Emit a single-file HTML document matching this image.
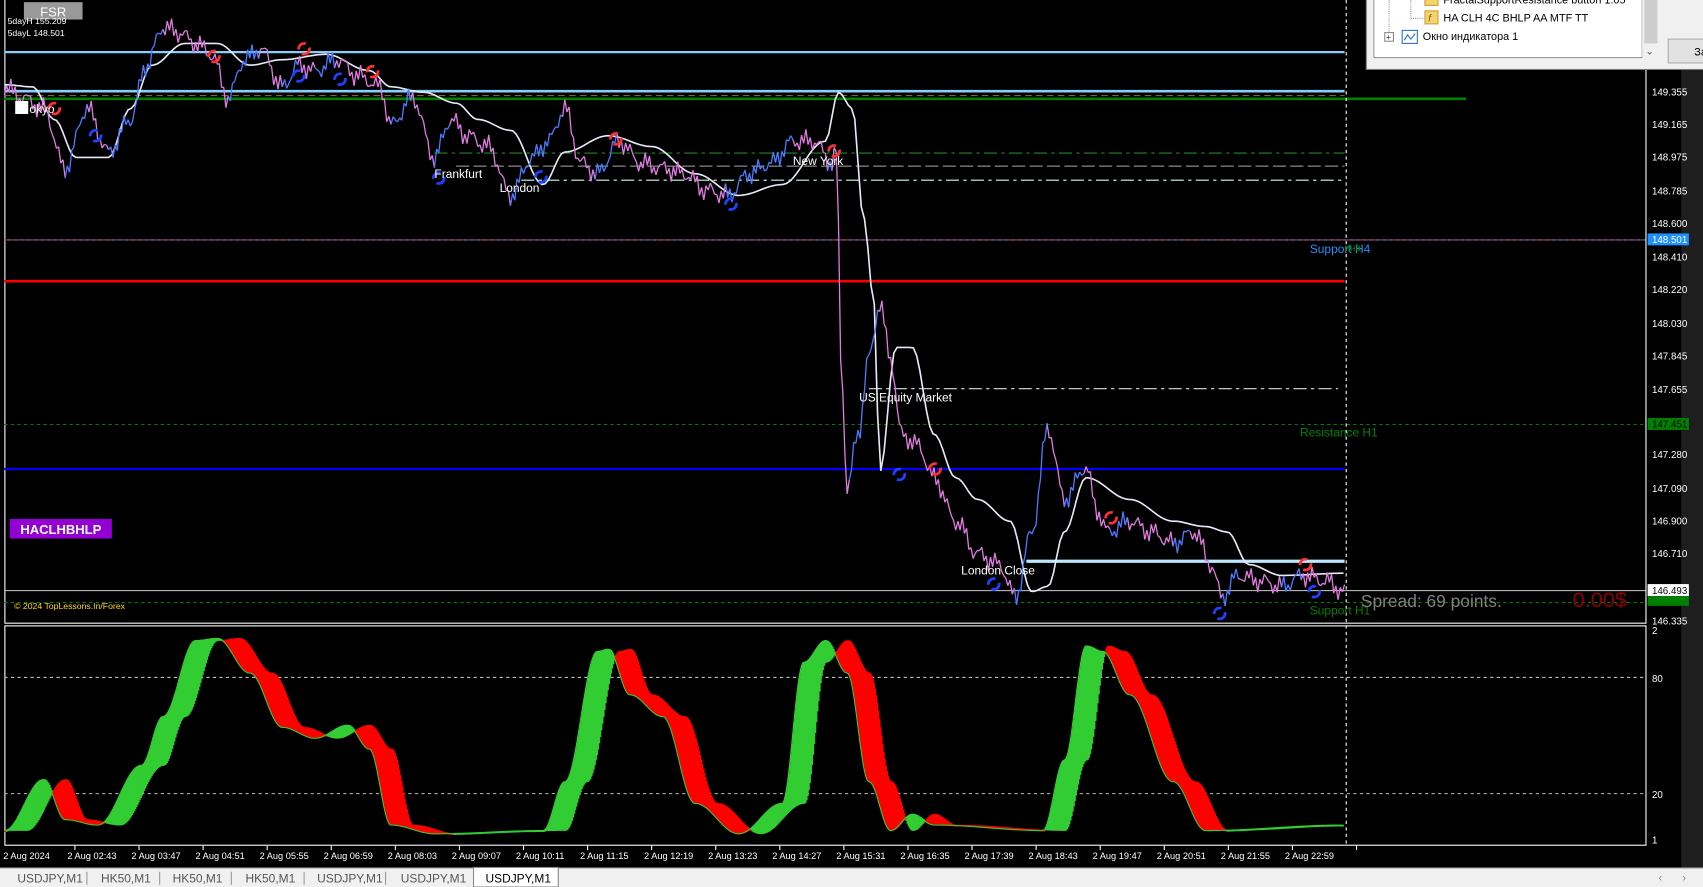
<!DOCTYPE html>
<html><head><meta charset="utf-8"><style>
html,body{margin:0;padding:0;background:#000;overflow:hidden}
svg{display:block}
text{font-family:"Liberation Sans",sans-serif}
</style></head><body>
<svg id="s" width="1703" height="887" viewBox="0 0 1568 817" preserveAspectRatio="none" xmlns="http://www.w3.org/2000/svg">
<rect width="1568" height="817" fill="#000"/>
<rect x="1548" y="0" width="20" height="800" fill="#1e1e1e"/>
<rect x="4.5" y="-1" width="1511" height="575" fill="none" stroke="#fff" stroke-width="1"/>
<rect x="4.5" y="576.5" width="1511" height="202" fill="none" stroke="#fff" stroke-width="1"/>
<line x1="4" y1="48" x2="1238" y2="48" stroke="#87cefa" stroke-width="2"/>
<line x1="4" y1="84" x2="1238" y2="84" stroke="#87cefa" stroke-width="2.5"/>
<line x1="4" y1="91" x2="1350" y2="91" stroke="#008000" stroke-width="2.5"/>
<line x1="4" y1="88" x2="1238" y2="88" stroke="#a0522d" stroke-dasharray="6,4" stroke-width="1"/>
<line x1="400" y1="141" x2="1238" y2="141" stroke="#1e8c1e" stroke-dasharray="12,4,3,4"/>
<line x1="420" y1="153" x2="1238" y2="153" stroke="#aaa" stroke-dasharray="12,4"/>
<line x1="480" y1="166" x2="1235" y2="166" stroke="#cfe" stroke-dasharray="12,4,3,4"/>
<line x1="4" y1="221" x2="1515" y2="221" stroke="#ff2020" stroke-dasharray="3,3"/>
<line x1="4" y1="221" x2="1515" y2="221" stroke="#3399ff" stroke-dasharray="3,3" stroke-dashoffset="3"/>
<line x1="4" y1="259" x2="1238" y2="259" stroke="#ff0000" stroke-width="2.5"/>
<line x1="800" y1="358" x2="1232" y2="358" stroke="#ddd" stroke-dasharray="12,4,3,4"/>
<line x1="4" y1="391" x2="1515" y2="391" stroke="#008000" stroke-dasharray="3,3"/>
<line x1="4" y1="432" x2="1238" y2="432" stroke="#0000ff" stroke-width="2"/>
<line x1="945" y1="517" x2="1238" y2="517" stroke="#bde6ff" stroke-width="3"/>
<line x1="4" y1="544" x2="1515" y2="544" stroke="#ccc" stroke-width="1"/>
<line x1="4" y1="555" x2="1515" y2="555" stroke="#008000" stroke-dasharray="3,3"/>
<line x1="1239.5" y1="0" x2="1239.5" y2="780" stroke="#fff" stroke-dasharray="3,3"/>
<line x1="4" y1="624" x2="1515" y2="624" stroke="#bbb" stroke-dasharray="3,3"/>
<line x1="4" y1="731" x2="1515" y2="731" stroke="#bbb" stroke-dasharray="3,3"/>
<path id="oscG" fill="#32cd32" stroke="#32cd32" stroke-width="0.6"/>
<path id="oscR" fill="#ff0000" stroke="#ff0000" stroke-width="0.6"/>
<polyline id="oscL" fill="none" stroke="#32cd32" stroke-width="1"/>
<polyline id="ma" fill="none" stroke="#e8e8f8" stroke-width="1.5"/>
<path id="pPink" fill="none" stroke="#e07be0" stroke-width="1.2"/>
<path id="pBlue" fill="none" stroke="#4b7bff" stroke-width="1.2"/>
<g id="marks"></g>
<rect x="22" y="2" width="54" height="16" fill="#999"/>
<text x="49" y="15" fill="#fff" font-size="12" text-anchor="middle">FSR</text>
<text x="7" y="22" fill="#fff" font-size="8">5dayH 155.209</text>
<text x="7" y="33" fill="#fff" font-size="8">5dayL 148.501</text>
<rect x="14" y="93" width="12" height="12" fill="#fff"/>
<text x="27" y="104" fill="#fff" font-size="11">okyo</text>
<text x="400" y="164" fill="#fff" font-size="11">Frankfurt</text>
<text x="460" y="177" fill="#fff" font-size="11">London</text>
<text x="730" y="152" fill="#fff" font-size="11">New York</text>
<text x="791" y="370" fill="#fff" font-size="11">US Equity Market</text>
<text x="885" y="529" fill="#fff" font-size="11">London Close</text>
<text x="1206" y="233" fill="#1e90ff" font-size="11">Support H4</text>
<text x="1238" y="231" fill="#008000" font-size="9">ина</text>
<text x="1197" y="402" fill="#008000" font-size="11">Resistance H1</text>
<text x="1206" y="566" fill="#008000" font-size="11">Support H1</text>
<text x="1253" y="559" fill="#808080" font-size="16">Spread: 69 points.</text>
<text x="1448" y="559" fill="#8b0000" font-size="20">0.00$</text>
<rect x="9" y="478" width="94" height="18" fill="#9400d3"/>
<text x="56" y="492" fill="#fff" font-size="12" font-weight="bold" text-anchor="middle">HACLHBHLP</text>
<text x="13" y="561" fill="#ffd700" font-size="8">© 2024 TopLessons.In/Forex</text>
<g fill="#fff" font-size="9">
<text x="1521" y="88">149.355</text><text x="1521" y="118">149.165</text><text x="1521" y="148">148.975</text>
<text x="1521" y="179">148.785</text><text x="1521" y="209">148.600</text><text x="1521" y="240">148.410</text>
<text x="1521" y="270">148.220</text><text x="1521" y="301">148.030</text><text x="1521" y="331">147.845</text>
<text x="1521" y="362">147.655</text><text x="1521" y="422">147.280</text><text x="1521" y="453">147.090</text>
<text x="1521" y="483">146.900</text><text x="1521" y="513">146.710</text><text x="1521" y="575">146.335</text>
<text x="1521" y="584">2</text><text x="1521" y="628">80</text><text x="1521" y="735">20</text><text x="1521" y="777">1</text>
</g>
<rect x="1517" y="215" width="38" height="11" fill="#1e90ff"/><text x="1521" y="224" fill="#fff" font-size="9">148.501</text>
<rect x="1517" y="385" width="38" height="11" fill="#008000"/><text x="1521" y="394" fill="#000" font-size="9">147.451</text>
<rect x="1517" y="538" width="38" height="11" fill="#fff"/><text x="1521" y="547" fill="#000" font-size="9">146.493</text>
<rect x="1517" y="549" width="38" height="9" fill="#008000"/>
<g fill="#fff" font-size="8.5" id="times"></g>
<rect x="0" y="799" width="1568" height="18" fill="#f0f0f0"/>
<line x1="0" y1="799.5" x2="1568" y2="799.5" stroke="#999"/>
<g font-size="11" fill="#555">
<text x="16" y="813">USDJPY,M1</text><text x="93" y="813">HK50,M1</text><text x="159" y="813">HK50,M1</text>
<text x="226" y="813">HK50,M1</text><text x="292" y="813">USDJPY,M1</text><text x="369" y="813">USDJPY,M1</text>
</g>
<g stroke="#999"><line x1="80" y1="803" x2="80" y2="815"/><line x1="147" y1="803" x2="147" y2="815"/><line x1="213" y1="803" x2="213" y2="815"/><line x1="280" y1="803" x2="280" y2="815"/><line x1="355" y1="803" x2="355" y2="815"/></g>
<rect x="436" y="799" width="78" height="18" fill="#fff" stroke="#888"/>
<text x="447" y="813" font-size="11" fill="#000">USDJPY,M1</text>
<text x="1527" y="812" font-size="10" fill="#888">‹</text><text x="1549" y="812" font-size="10" fill="#888">›</text>
<rect x="1258" y="-1" width="320" height="65" fill="#f0f0f0" stroke="#777"/>
<rect x="1265" y="-1" width="247" height="54" fill="#fff" stroke="#999"/>
<rect x="1512" y="0" width="16" height="53" fill="#f0f0f0"/>
<rect x="1514" y="0" width="12" height="40" fill="#cdcdcd"/>
<text x="1515" y="50" font-size="9" fill="#555">⌄</text>
<rect x="1536" y="36" width="40" height="22" fill="#e1e1e1" stroke="#adadad"/>
<text x="1560" y="51" font-size="10" fill="#000">За</text>
<line x1="1279" y1="0" x2="1279" y2="34" stroke="#999" stroke-dasharray="1,1"/>
<line x1="1299" y1="0" x2="1299" y2="17" stroke="#999" stroke-dasharray="1,1"/>
<line x1="1299" y1="17" x2="1311" y2="17" stroke="#999" stroke-dasharray="1,1"/>
<rect x="1312" y="10" width="12" height="12" fill="#f3d36e" stroke="#c9a030"/>
<rect x="1312" y="-7" width="12" height="12" fill="#f3d36e" stroke="#c9a030"/>
<text x="1315" y="20" font-size="9" fill="#8a5a00" font-style="italic">f</text>
<text x="1329" y="3" font-size="10" fill="#000">FractalSupportResistance button 1.05</text>
<text x="1329" y="20" font-size="10" fill="#000">HA CLH 4C BHLP AA MTF TT</text>
<rect x="1275" y="30" width="8" height="8" fill="#fff" stroke="#888"/>
<text x="1276" y="37" font-size="8" fill="#333">+</text>
<rect x="1291" y="28" width="14" height="12" fill="#fff" stroke="#2a6fd6"/>
<path d="M1293 37 L1296 32 L1299 36 L1303 31" stroke="#2a6fd6" fill="none"/>
<text x="1310" y="37" font-size="10" fill="#000">Окно индикатора 1</text>
</svg>
<script>
(function(){
var NS="http://www.w3.org/2000/svg";
function $(i){return document.getElementById(i);}
var sv=$('s');
function el(t,a,p){var e=document.createElementNS(NS,t);for(var k in a)e.setAttribute(k,a[k]);(p||sv).appendChild(e);return e;}
function interp(pts,x){if(x<=pts[0][0])return pts[0][1];for(var i=1;i<pts.length;i++){if(x<=pts[i][0]){var a=pts[i-1],b=pts[i];var t=(x-a[0])/(b[0]-a[0]);t=(1-Math.cos(t*Math.PI))/2;return a[1]+(b[1]-a[1])*t;}}return pts[pts.length-1][1];}
var P=[[4,80],[20,90],[40,100],[60,155],[80,100],[100,140],[120,110],[135,60],[150,25],[165,30],[180,40],[195,50],[210,90],[225,55],[240,45],[260,80],[275,60],[290,65],[310,55],[330,70],[350,80],[360,115],[380,90],[400,145],[415,110],[430,125],[450,135],[470,180],[490,145],[505,130],[520,100],[535,150],[550,160],[570,130],[590,150],[610,155],[630,160],[650,175],[670,180],[690,160],[710,150],[730,130],[750,130],[765,150],[770,140],[775,350],[780,450],[790,400],[800,330],[810,280],[820,330],[830,400],[845,410],[860,440],[880,480],[900,510],[920,520],[935,550],[950,490],[965,395],[980,460],[1000,430],[1010,470],[1020,490],[1040,480],[1060,490],[1080,500],[1100,490],[1115,520],[1125,550],[1140,530],[1160,535],[1180,540],[1200,530],[1220,535],[1238,545]];
var pk="",bl="",prev=null,x,y;
for(x=4;x<=1238;x+=2){y=interp(P,x)+Math.sin(x*1.7)*6+Math.sin(x*0.43)*5;if(prev){var up=interp(P,x+4)<interp(P,x-4)-1;var seg="M"+prev[0]+" "+prev[1].toFixed(1)+"L"+x+" "+y.toFixed(1);if(up)bl+=seg;else pk+=seg;}prev=[x,y];}
$('pPink').setAttribute('d',pk);$('pBlue').setAttribute('d',bl);
var M=[[4,78],[30,80],[50,110],[70,145],[100,145],[120,100],[140,60],[170,40],[200,40],[230,60],[260,55],[300,50],[340,65],[360,80],[390,85],[420,95],[440,110],[470,120],[500,170],[520,140],[560,125],[600,135],[640,160],[680,180],[720,170],[760,130],[772,85],[785,100],[795,200],[805,280],[810,435],[825,320],[840,320],[860,400],[880,440],[900,460],[930,480],[950,545],[965,540],[980,490],[1000,440],[1040,460],[1080,480],[1110,485],[1130,490],[1150,520],[1180,530],[1238,528]];
var s="";for(x=4;x<=1238;x+=3)s+=x+","+interp(M,x).toFixed(1)+" ";$('ma').setAttribute('points',s);
var G=[[4,765],[40,718],[60,755],[90,760],[130,705],[150,660],[180,590],[200,588],[230,620],[260,670],[290,680],[320,668],[340,690],[360,760],[400,768],[500,765],[520,720],[550,600],[560,598],[580,640],[610,660],[640,740],[680,768],[720,740],[740,610],[760,590],[780,620],[800,720],[820,765],[840,750],[860,760],[960,765],[980,700],[1000,595],[1015,600],[1040,640],[1080,720],[1110,765],[1235,760]];
var gd="",rd="",gl="";
for(x=4;x<=1236;x++){var a=interp(G,x),b=interp(G,x-20);var t0=Math.min(a,b),b0=Math.max(a,b);if(b0-t0<1)b0=t0+1;var q="M"+x+" "+t0.toFixed(1)+"H"+(x+1.3)+"V"+b0.toFixed(1)+"H"+x+"Z";if(a<b)gd+=q;else rd+=q;gl+=x+","+a.toFixed(1)+" ";}
$('oscG').setAttribute('d',gd);$('oscR').setAttribute('d',rd);$('oscL').setAttribute('points',gl);
var T=["2 Aug 2024","2 Aug 02:43","2 Aug 03:47","2 Aug 04:51","2 Aug 05:55","2 Aug 06:59","2 Aug 08:03","2 Aug 09:07","2 Aug 10:11","2 Aug 11:15","2 Aug 12:19","2 Aug 13:23","2 Aug 14:27","2 Aug 15:31","2 Aug 16:35","2 Aug 17:39","2 Aug 18:43","2 Aug 19:47","2 Aug 20:51","2 Aug 21:55","2 Aug 22:59"];
var tg=$('times');
T.forEach(function(t,i){var xx=3+i*59;el('text',{x:xx,y:791},tg).textContent=t;el('line',{x1:xx+66,y1:779,x2:xx+66,y2:783,stroke:'#fff'});});
var mk=$('marks');
[[50,100,1],[197,52,1],[280,45,1],[343,66,1],[567,128,1],[768,139,1],[861,432,1],[1023,477,1],[1202,520,1],[88,125,0],[275,70,0],[313,73,0],[404,164,0],[498,163,0],[673,188,0],[828,437,0],[915,538,0],[1123,565,0],[1210,545,0]].forEach(function(m){el('circle',{cx:m[0],cy:m[1],r:5,fill:'none',stroke:m[2]?'#ff3030':'#2040ff','stroke-width':2.5,'stroke-dasharray':'10,5'},mk);});
})();
</script>
</body></html>
